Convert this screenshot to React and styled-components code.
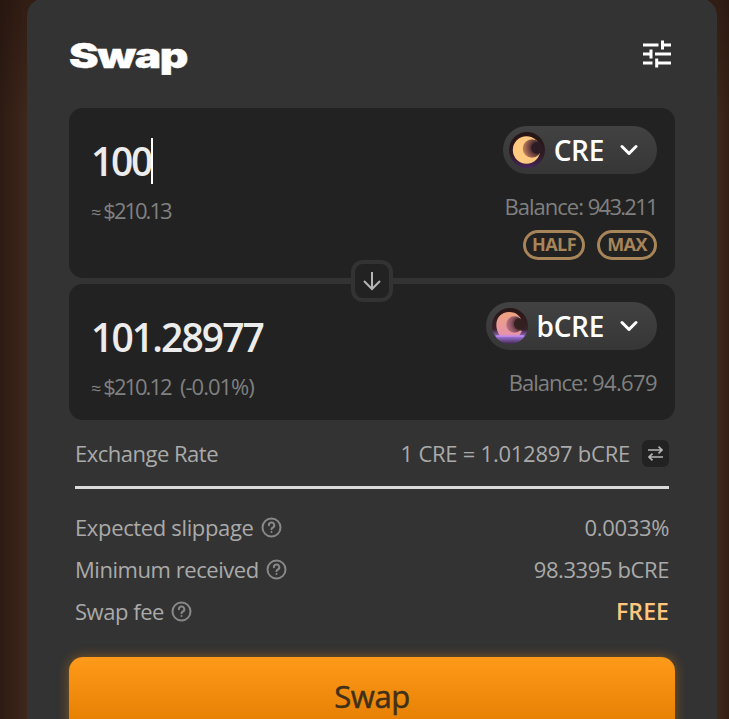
import React from 'react';
import styled, { createGlobalStyle } from 'styled-components';

const GlobalStyle = createGlobalStyle`
  * {
    box-sizing: border-box;
  }

  body {
    margin: 0;
    overflow: hidden;
    background: #2b1a12;
    font-family: "Open Sans", "Noto Sans", sans-serif;
  }
`;

const Page = styled.div`
  display: flex;
  height: 719px;
  padding-left: 27px;
  overflow: hidden;
  background:
    linear-gradient(rgba(30, 15, 10, 0.4), rgba(30, 15, 10, 0) 120px),
    linear-gradient(90deg, #2d1b13 0, #3f271b 27px, #3f271b 717px, #331f15 729px);
`;

const Card = styled.main`
  width: 690px;
  height: 800px;
  flex-shrink: 0;
  margin-top: -2px;
  padding: 2px 42px 0;
  border-radius: 18px;
  background: #333;
`;

const Header = styled.header`
  display: flex;
  align-items: center;
  justify-content: space-between;
  height: 108px;
  padding-right: 4px;
`;

const Title = styled.h1`
  margin: 4px 0 0;
  color: #fff;
  font-family: Inter, sans-serif;
  font-size: 34px;
  font-weight: 900;
  line-height: 40px;
  letter-spacing: -1px;
  transform: scaleX(1.305);
  transform-origin: left;
  -webkit-text-stroke: 0.4px #fff;
`;

const Panel = styled.section`
  display: flex;
  justify-content: space-between;
  height: ${(props) => props.$height}px;
  margin-bottom: ${(props) => props.$gap || 0}px;
  padding: 18px 18px 0 22px;
  border-radius: 14px;
  background: #222;
`;

const Side = styled.div`
  display: flex;
  flex-direction: column;
  align-items: ${(props) => (props.$end ? 'flex-end' : 'flex-start')};
`;

const Amount = styled.div`
  display: flex;
  align-items: center;
  height: 69px;
  color: #ececec;
  font-size: 39px;
  font-weight: 600;
  letter-spacing: ${(props) => props.$spacing}px;
`;

const Caret = styled.span`
  width: 2px;
  height: 46px;
  background: #fff;
`;

const Muted = styled.span`
  color: #808080;
  font-size: 22px;
  font-weight: 400;
  line-height: 30px;
  letter-spacing: -1px;
  white-space: pre;
`;

const Figure = styled.span`
  letter-spacing: ${(props) => props.$spacing}px;
`;

const Approx = styled.span`
  margin-right: 2px;
  font-size: 18px;
  letter-spacing: 0;
`;

const TokenButton = styled.button`
  display: flex;
  align-items: center;
  height: 48px;
  margin-bottom: 17px;
  padding: 0 19px 0 5px;
  border: none;
  border-radius: 24px;
  background: linear-gradient(#424242, #363636);
  color: #fff;
  font-family: inherit;
  font-size: 28px;
  font-weight: 600;
  letter-spacing: -0.3px;

  span {
    margin: 0 16px 0 8px;
  }
`;

const Pills = styled.div`
  display: flex;
  gap: 12px;
  margin-top: 9px;
`;

const Pill = styled.button`
  display: flex;
  align-items: center;
  justify-content: center;
  width: ${(props) => props.$width}px;
  height: 30px;
  padding: 0 0 2px;
  border: 3px solid #a88459;
  border-radius: 15px;
  background: none;
  color: #a88459;
  font-family: inherit;
  font-size: 18px;
  font-weight: 700;
  letter-spacing: -0.6px;
`;

const PanelStack = styled.div`
  position: relative;
`;

const FlipButton = styled.button`
  position: absolute;
  top: 152px;
  left: 282px;
  display: flex;
  align-items: center;
  justify-content: center;
  width: 42px;
  height: 42px;
  padding: 0;
  border: 4px solid #333;
  border-radius: 12px;
  background: #222;
`;

const Details = styled.div`
  padding: 0 6px;
`;

const Row = styled.div`
  display: flex;
  align-items: center;
  justify-content: space-between;
  height: ${(props) => props.$height || 42}px;
  color: #aaa;
  font-size: 22px;
  white-space: nowrap;
`;

const Label = styled.span`
  display: flex;
  align-items: center;
  gap: 7px;
  letter-spacing: ${(props) => props.$spacing}px;
`;

const RateButton = styled.button`
  display: flex;
  align-items: center;
  justify-content: center;
  width: 27px;
  height: 27px;
  margin: 2px 0 0 5px;
  padding: 0;
  border: none;
  border-radius: 6px;
  background: #222;
`;

const Divider = styled.hr`
  height: 3px;
  margin: 1px 0 17px;
  border: none;
  background: #dadada;
`;

const Free = styled.span`
  color: #ffc77d;
  font-size: 23px;
  font-weight: 600;
  letter-spacing: 0.1px;
`;

const SwapButton = styled.button`
  display: block;
  width: 100%;
  height: 78px;
  margin-top: 25px;
  padding: 0 0 1px;
  border: none;
  border-radius: 14px;
  background: linear-gradient(#ff9a1a, #e07b00);
  box-shadow: 0 0 12px rgba(255, 145, 0, 0.4);
  color: #40301a;
  font-family: inherit;
  font-size: 31px;
  font-weight: 500;
  letter-spacing: -0.4px;
  -webkit-text-stroke: 0.5px #40301a;
`;

const SettingsIcon = () => (
  <svg width="28" height="28" viewBox="0 0 28 28" fill="none" stroke="#fff" strokeWidth="3">
    <path d="M0 5h15.500M19.500 .5v9M20 5h8M0 14h8M8 9.500v9M12 14h16M0 23h9.500M13.700 18.500v9M14 23h14" />
  </svg>
);

const Chevron = () => (
  <svg width="18" height="12" viewBox="0 0 18 12" fill="none" stroke="#fff" strokeWidth="3" strokeLinecap="round" strokeLinejoin="round">
    <path d="M2 2.500L9 9.500L16 2.500" />
  </svg>
);

const HelpIcon = () => (
  <svg width="21" height="21" viewBox="0 0 21 21" fill="none" stroke="#888" strokeWidth="2" strokeLinecap="round">
    <circle cx="10.500" cy="10.500" r="9" />
    <path d="M7.900 8.200a2.700 2.700 0 1 1 4 2.300c-1 .5-1.400.9-1.400 1.700" />
    <path d="M10.500 14.900v.1" />
  </svg>
);

const CreIcon = () => (
  <svg width="38" height="38" viewBox="0 0 38 38">
    <defs>
      <linearGradient id="creBg" x2="0" y2="1">
        <stop offset="0" stopColor="#261514" />
        <stop offset=".6" stopColor="#2c1b20" />
        <stop offset="1" stopColor="#44265c" />
      </linearGradient>
      <radialGradient id="creShade" cx=".8" cy=".45" r=".85">
        <stop offset=".3" stopColor="#33202a" />
        <stop offset=".65" stopColor="#8a5648" />
        <stop offset="1" stopColor="#cf8c64" />
      </radialGradient>
    </defs>
    <circle cx="19" cy="19" r="18" fill="url(#creBg)" />
    <circle cx="18.500" cy="19" r="13.700" fill="#ffc980" />
    <circle cx="24" cy="17.500" r="9.300" fill="url(#creShade)" />
    <circle cx="29" cy="17" r="5.800" fill="#2e1c24" />
  </svg>
);

const BcreIcon = () => (
  <svg width="38" height="38" viewBox="0 0 38 38">
    <defs>
      <linearGradient id="bcreBg" x2="0" y2="1">
        <stop offset="0" stopColor="#281514" />
        <stop offset=".6" stopColor="#38222c" />
        <stop offset=".8" stopColor="#9b72d2" />
        <stop offset="1" stopColor="#412850" />
      </linearGradient>
      <linearGradient id="bcreMoon" x2="0" y2="1">
        <stop offset="0" stopColor="#eda37e" />
        <stop offset="1" stopColor="#e592ab" />
      </linearGradient>
      <radialGradient id="bcreShade" cx=".85" cy=".45" r=".9">
        <stop offset=".3" stopColor="#38242a" />
        <stop offset=".6" stopColor="#8b5260" />
        <stop offset="1" stopColor="#c4778a" />
      </radialGradient>
    </defs>
    <circle cx="19" cy="19" r="18" fill="url(#bcreBg)" />
    <path d="M9 29C1 17 7 5 18 5c8 0 12 5 13 10c-7-3-10 7 0 9l-3 5z" fill="url(#bcreMoon)" />
    <circle cx="23.500" cy="17.500" r="8.300" fill="url(#bcreShade)" />
    <circle cx="28.500" cy="17" r="5.500" fill="#33201f" />
    <path d="M6 29h26" stroke="#c28cec" strokeWidth="2" strokeLinecap="round" opacity=".8" />
  </svg>
);

const App = () => {
  return (
    <>
    <GlobalStyle />
    <Page>
      <Card>
        <Header>
          <Title>Swap</Title>
          <SettingsIcon />
        </Header>

        <PanelStack>
          <Panel $height={170} $gap={6}>
            <Side>
              <Amount $spacing={-2.3}>100<Caret /></Amount>
              <Muted><Approx>≈</Approx><Figure $spacing={-2}>$210.13</Figure></Muted>
            </Side>
            <Side $end>
              <TokenButton>
                <CreIcon />
                <span>CRE</span>
                <Chevron />
              </TokenButton>
              <Muted>Balance: <Figure $spacing={-1.7}>943.211</Figure></Muted>
              <Pills>
                <Pill $width={62}>HALF</Pill>
                <Pill $width={60}>MAX</Pill>
              </Pills>
            </Side>
          </Panel>
          <Panel $height={136}>
            <Side>
              <Amount $spacing={-1.9}>101.28977</Amount>
              <Muted><Approx>≈</Approx><Figure $spacing={-2}>$210.12</Figure><Figure $spacing={-1}>{'  '}</Figure>(-0.01%)</Muted>
            </Side>
            <Side $end>
              <TokenButton>
                <BcreIcon />
                <span>bCRE</span>
                <Chevron />
              </TokenButton>
              <Muted>Balance: <Figure $spacing={-0.6}>94.679</Figure></Muted>
            </Side>
          </Panel>
          <FlipButton>
            <svg width="20" height="20" viewBox="0 0 20 20" fill="none" stroke="#b5b5b5" strokeWidth="2">
              <path d="M10 1v17M2 10l8 8l8-8" />
            </svg>
          </FlipButton>
        </PanelStack>

        <Details>
          <Row $height={65}>
            <Label $spacing={-0.5}>Exchange Rate</Label>
            <Label $spacing={-0.25}>
              1 CRE = 1.012897 bCRE
              <RateButton>
                <svg width="15" height="15" viewBox="0 0 15 15" fill="none" stroke="#b5b5b5" strokeWidth="1.600">
                  <path d="M0 4h14M10.500 .7L14 4l-3.500 3.300M15 11H1M4.500 7.700L1 11l3.500 3.300" />
                </svg>
              </RateButton>
            </Label>
          </Row>
          <Divider />
          <Row>
            <Label $spacing={-0.35}>Expected slippage <HelpIcon /></Label>
            <Label $spacing={-0.35}>0.0033%</Label>
          </Row>
          <Row>
            <Label $spacing={-0.45}>Minimum received <HelpIcon /></Label>
            <Label $spacing={-0.4}>98.3395 bCRE</Label>
          </Row>
          <Row>
            <Label $spacing={-0.45}>Swap fee <HelpIcon /></Label>
            <Free>FREE</Free>
          </Row>
        </Details>

        <SwapButton>Swap</SwapButton>
      </Card>
    </Page>
    </>
  );
};

export default App;
